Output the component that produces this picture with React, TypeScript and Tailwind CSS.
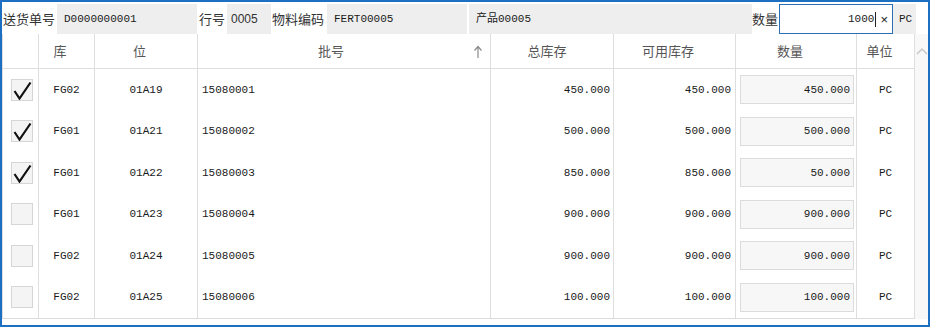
import React from "react";

interface StockRow {
  checked: boolean;
  wh: string;
  bin: string;
  batch: string;
  total: string;
  avail: string;
  qty: string;
}

const rows: StockRow[] = [
  { checked: true, wh: "FG02", bin: "01A19", batch: "15080001", total: "450.000", avail: "450.000", qty: "450.000" },
  { checked: true, wh: "FG01", bin: "01A21", batch: "15080002", total: "500.000", avail: "500.000", qty: "500.000" },
  { checked: true, wh: "FG01", bin: "01A22", batch: "15080003", total: "850.000", avail: "850.000", qty: "50.000" },
  { checked: false, wh: "FG01", bin: "01A23", batch: "15080004", total: "900.000", avail: "900.000", qty: "900.000" },
  { checked: false, wh: "FG02", bin: "01A24", batch: "15080005", total: "900.000", avail: "900.000", qty: "900.000" },
  { checked: false, wh: "FG02", bin: "01A25", batch: "15080006", total: "100.000", avail: "100.000", qty: "100.000" }
];

const cjk = "font-['Noto_Sans_CJK_SC','Liberation_Sans',sans-serif]";
const mono = "font-['Liberation_Mono','Noto_Sans_CJK_SC',monospace]";

const Label = ({ text, w }: { text: string; w: string }) => (
  <div className={`${w} h-full flex items-center text-[13px] text-[#333] ${cjk}`}>{text}</div>
);

const Field = ({ text, w, font }: { text: string; w: string; font?: string }) => (
  <div className={`${w} h-full flex items-center pl-[7px] bg-[#eeeeee] text-[11px] text-[#1a1a1a] ${font || mono}`}>
    {text}
  </div>
);

const CheckBox = ({ checked }: { checked: boolean }) => (
  <div className="w-[22px] h-[22px] bg-[#f4f4f4] border border-[#d6d6d6]">
    {checked && (
      <svg width="20" height="20" viewBox="0 0 20 20">
        <path d="M2.5 11 L7.5 18.5 L18.5 2.5" fill="none" stroke="#111" strokeWidth="2.2" />
      </svg>
    )}
  </div>
);

const headCell = `h-[35px] border-r border-b border-[#dedede] flex items-center justify-center text-[13px] text-[#555] ${cjk}`;
const cell = "h-[41.5px] border-r border-[#dedede] flex items-center text-[11px] text-[#1a1a1a]";

const App: React.FC = () => {
  return (
    <div className="w-[930px] h-[327px] border-2 border-[#1c6fc1] bg-white flex flex-col overflow-hidden">
      {/* 顶部表单 */}
      <div className="h-[32px] pt-[2px] flex items-stretch pl-[1px]">
        <Label text="送货单号" w="w-[54px]" />
        <Field text="D0000000001" w="w-[140px]" />
        <div className="w-[2px]" />
        <Label text="行号" w="w-[28px]" />
        <div className="w-[44px] h-full flex items-center pl-[4px] bg-[#eeeeee] text-[12px] text-[#333] font-['Liberation_Sans',sans-serif]">
          0005
        </div>
        <div className="w-[1px]" />
        <Label text="物料编码" w="w-[55px]" />
        <Field text="FERT00005" w="w-[140px]" />
        <div className="w-[2px]" />
        <Field text="产品00005" w="w-[283px]" />
        <Label text="数量" w="w-[27px]" />
        <div className="w-[114px] h-full border border-[#2c6db5] bg-white flex items-center justify-end text-[11px] text-[#1a1a1a]">
          <span className={mono}>1000</span>
          <span className="w-[1px] h-[15px] bg-[#222] ml-[1px]" />
          <span className="ml-[4px] mr-[4px] text-[13px] leading-none font-['Liberation_Sans',sans-serif]">×</span>
        </div>
        <div className={`w-[23px] h-full bg-[#eeeeee] flex items-center pl-[6px] text-[11px] text-[#1a1a1a] ${mono}`}>PC</div>
      </div>

      {/* 表格 */}
      <div className="flex border-l border-[#dcdcdc]">
        <div className="grid grid-cols-[36px_56px_103px_293px_123px_122px_121px_58px]">
          <div className={headCell} />
          <div className={`${headCell} pr-[13px]`}>库</div>
          <div className={`${headCell} pr-[13px]`}>位</div>
          <div className={`${headCell} relative pr-[26px]`}>
            批号
            <svg className="absolute right-[7px] top-[11px]" width="10" height="14" viewBox="0 0 10 14">
              <path d="M5 13 V2 M1.5 5.5 L5 1.5 L8.5 5.5" fill="none" stroke="#8a8a8a" strokeWidth="1.2" />
            </svg>
          </div>
          <div className={`${headCell} pr-[10px]`}>总库存</div>
          <div className={`${headCell} pr-[13px]`}>可用库存</div>
          <div className={`${headCell} pr-[12px]`}>数量</div>
          <div className={`${headCell} pr-[12px]`}>单位</div>

          {rows.map((r) => (
            <React.Fragment key={r.batch}>
              <div className={`${cell} justify-center pl-[2px]`}>
                <CheckBox checked={r.checked} />
              </div>
              <div className={`${cell} ${mono} justify-center`}>{r.wh}</div>
              <div className={`${cell} ${mono} justify-center`}>{r.bin}</div>
              <div className={`${cell} ${mono} pl-[4px]`}>{r.batch}</div>
              <div className={`${cell} ${mono} justify-end pr-[3px]`}>{r.total}</div>
              <div className={`${cell} ${mono} justify-end pr-[4px]`}>{r.avail}</div>
              <div className={`${cell} pl-[4px] pr-[2px]`}>
                <div className={`w-full h-[29px] bg-[#f7f7f7] border border-[#dcdcdc] flex items-center justify-end pr-[3px] ${mono}`}>
                  {r.qty}
                </div>
              </div>
              <div className={`${cell} ${mono} justify-center`}>PC</div>
            </React.Fragment>
          ))}
          <div className="col-span-8 h-[1px] bg-[#dcdcdc]" />
        </div>
        <div className="flex-1 bg-[#f8f8f8] flex justify-center pt-[13px]">
          <svg width="12" height="8" viewBox="0 0 12 8">
            <path d="M1 7 L6 2 L11 7" fill="none" stroke="#c8c8c8" strokeWidth="1.5" />
          </svg>
        </div>
      </div>
      <div className="flex-1 bg-white" />
    </div>
  );
};

export default App;
